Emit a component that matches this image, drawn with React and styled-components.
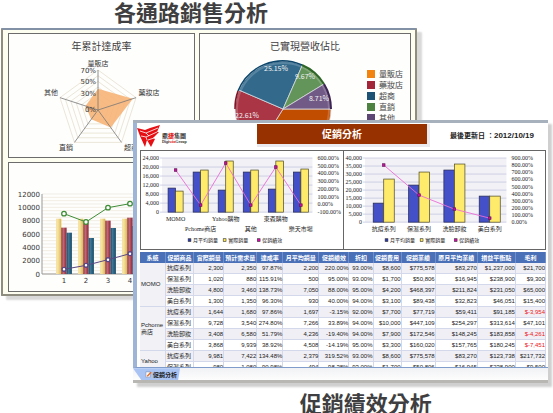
import React from "react";
import styled, { createGlobalStyle, css } from "styled-components";

const CJK = '"Noto Sans CJK TC", sans-serif';

const GlobalStyle = createGlobalStyle`
  *, *::before, *::after { box-sizing: border-box; }
  body {
    margin: 0;
    background: #fff;
    color: #333;
    font-family: "DejaVu Sans", ${CJK};
  }
`;

const Page = styled.main`
  display: flex;
  flex-direction: column;
  overflow: hidden;
`;

const Caption = styled.h1`
  margin: 0;
  font: 700 22px/22px ${CJK};
  color: #3f3f41;
  padding-left: ${(p) => p.$indent};
`;

const Stage = styled.div`
  display: grid;
  grid-template-columns: 133fr 284fr 131fr 5px;
  grid-template-rows: 92px auto;
  margin: 6px 0 8px;
`;

/* Dashboard window */

const BackWindow = styled.section`
  grid-column: 1 / 3;
  grid-row: 1 / 3;
  align-self: start;
  display: grid;
  grid-template-columns: 187fr 212fr;
  gap: 4px;
  margin-left: 1px;
  padding: 3px 4px 2px 5px;
  border: 2px solid #8f8c80;
  border-top-color: #8291a6;
  border-radius: 1px;
  background: #fefef0;
  box-shadow: 5px 4px 2px #d9d9d9;
`;

const Panel = styled.article`
  height: ${(p) => p.$height};
  border: 1px solid #6c6c6c;
  background: #fefefd;
  overflow: hidden;
  ${(p) => p.$wide && css`grid-column: 1 / -1;`}
`;

const PanelTitle = styled.h2`
  margin: 0;
  padding-top: 5px;
  font: 400 10px/14px ${CJK};
  text-align: center;
  color: #3f3f3f;
`;

const Drawing = styled.svg`
  display: block;
  width: ${(p) => p.$width || "100%"};
  overflow: visible;
`;

const ChartText = styled.text`
  font-family: ${(p) => p.$family || `"DejaVu Sans", ${CJK}`};
  font-size: 7px;
  fill: ${(p) => p.$color || "#333"};
  text-anchor: ${(p) => p.$anchor || "middle"};
`;

const SerifText = styled.text`
  font-family: "Liberation Serif", ${CJK};
  font-size: ${(p) => p.$size || "6px"};
  fill: #222;
  text-anchor: ${(p) => p.$anchor};
`;

const PieRow = styled.div`
  display: flex;
  justify-content: space-between;
  padding: 7px 7px 0 34px;
`;

const Legend = styled.ul`
  display: flex;
  flex-direction: column;
  margin: 8px 0 0;
  padding: 0;
  list-style: none;
`;

const LegendItem = styled.li`
  display: flex;
  align-items: center;
  gap: 4px;
  font: 400 8px/11px ${CJK};
  color: #444;
  &::before {
    content: "";
    width: 8px;
    height: 8px;
    background: ${(p) => p.$color};
  }
`;

/* Report window */

const FrontWindow = styled.section`
  grid-column: 2 / 4;
  grid-row: 2;
  z-index: 1;
  display: flex;
  flex-direction: column;
  min-width: 0;
  border-top: 3px solid #a7b0bd;
  border-bottom: 3px solid #b9b7b3;
  background: #fff;
  box-shadow: 4px 4px 2px #cfcfcf;
`;

const Sheet = styled.div`
  padding: 0 2px 0 3px;
  border-left: 4px solid #9fb5d8;
  border-bottom: 1px solid #7f9ccb;
`;

const SheetHeader = styled.header`
  display: grid;
  grid-template-columns: 117fr 172fr 116fr;
  height: 27px;
  padding-top: 1px;
`;

const Brand = styled.div`
  display: flex;
  gap: 1px;
  margin-left: -3px;
`;

const BrandName = styled.p`
  margin: 8px 0 0;
  font: 700 6px/7px ${CJK};
  color: #333;
  b { color: #e01818; }
  small {
    display: block;
    font: 700 4px/6px "Liberation Serif", serif;
  }
`;

const Banner = styled.h2`
  align-self: start;
  margin: 0;
  height: 23px;
  border-right: 3px solid #e9e9ee;
  border-bottom: 3px solid #e9e9ee;
  background: #973200;
  color: #fff;
  font: 700 10px/20px ${CJK};
  text-align: center;
`;

const Updated = styled.p`
  margin: 0;
  padding: 5px 12px 0 0;
  font: 700 7px/14px "Liberation Sans", ${CJK};
  text-align: right;
  white-space: nowrap;
  color: #222;
  time { font-size: 8px; }
`;

const ChartRow = styled.div`
  display: grid;
  grid-template-columns: 202fr 203fr;
  border: 1px solid #666;
  margin-bottom: 2px;
`;

const ChartCell = styled.div`
  & + & { border-left: 1px solid #666; }
`;

const TableClip = styled.div`
  height: 115px;
  overflow: hidden;
`;

const Table = styled.table`
  width: 100%;
  table-layout: fixed;
  border-collapse: separate;
  border-spacing: 0;
  font: 400 6px/10px "Liberation Sans", ${CJK};
  color: #222;
`;

const Col = styled.col`
  width: ${(p) => p.$width}px;
`;

const HeadCell = styled.th`
  height: 11px;
  padding: 0;
  background: #4a70b8;
  border-right: 1px solid #6f8fcb;
  color: #fff;
  font-weight: 700;
  white-space: nowrap;
`;

const Row = styled.tr`
  background: ${(p) => (p.$shaded ? "#efeff5" : "#fff")};
`;

const Cell = styled.td`
  height: 11px;
  padding: ${(p) => (p.$left ? "0 0 0 1px" : "0")};
  border-right: 1px solid #d3d8ea;
  border-bottom: 1px solid #d3d8ea;
  text-align: ${(p) => (p.$left ? "left" : "right")};
  white-space: nowrap;
  color: ${(p) => (p.$negative ? "#f01616" : "inherit")};
`;

const GroupCell = styled.th`
  padding: 0 0 0 1px;
  border-right: 1px solid #d3d8ea;
  border-bottom: 1px solid #d3d8ea;
  background: #f1f1f6;
  font-weight: 400;
  line-height: 7px;
  text-align: left;
  vertical-align: middle;
`;

const TabStrip = styled.footer`
  display: flex;
  height: 12px;
  background: linear-gradient(#f1f2f5, #fdfdfd);
`;

const Tab = styled.button`
  display: flex;
  align-items: center;
  gap: 1px;
  width: 47px;
  padding: 0 0 0 12px;
  border: 0;
  background: #a9c3f3;
  clip-path: polygon(0 0, 100% 0, 96% 100%, 18% 100%);
  font: 700 6px/11px ${CJK};
  color: #222;
  white-space: nowrap;
`;

/* Radar */

const RADAR_LABELS = [
  { text: "量販店", x: 97, y: 13 },
  { text: "藥妝店", x: 148, y: 42 },
  { text: "超商", x: 130, y: 97 },
  { text: "直銷", x: 65, y: 97 },
  { text: "其他", x: 50, y: 42 },
];
const RADAR_VALUES = [37, 64, 38, 20, 23];

function radarPoint(index, value) {
  const angle = ((index * 72 - 90) * Math.PI) / 180;
  const radius = (value / 70) * 40;
  return [97 + radius * Math.cos(angle), 57 + radius * Math.sin(angle)];
}
const radarRing = (values) => values.map((v, i) => radarPoint(i, v).join()).join(" ");

function RadarChart() {
  return (
    <Drawing viewBox="8 0 185 104">
      {[10, 20, 30, 40, 50, 60, 70].map((v) => (
        <polygon key={v} points={radarRing([v, v, v, v, v])} fill="none" stroke="#ebe6d8" />
      ))}
      <polygon points={radarRing(RADAR_VALUES)} fill="#f7b477" fillOpacity="0.9" />
      {RADAR_LABELS.map((label, i) => {
        const [x, y] = radarPoint(i, 70);
        return (
          <g key={label.text}>
            <line x1="97" y1="57" x2={x} y2={y} stroke="#777" strokeWidth="0.8" />
            <ChartText x={label.x} y={label.y} $family={CJK}>{label.text}</ChartText>
          </g>
        );
      })}
      {[[70, 20], [50, 31], [30, 43], [0, 59]].map(([v, y]) => (
        <ChartText key={v} x="95" y={y} $anchor="end">{v}%</ChartText>
      ))}
    </Drawing>
  );
}

/* Pie */

const SLICES = [
  { name: "量販店", value: 33.86, color: "#c04d00", swatch: "#f2830f" },
  { name: "藥妝店", value: 22.61, color: "#a93545", swatch: "#a32638", label: [13, 58] },
  { name: "超商", value: 25.15, color: "#336a8c", swatch: "#1c5273", label: [42, 11] },
  { name: "直銷", value: 9.67, color: "#63945a", swatch: "#4d8241", label: [71, 19] },
  { name: "其他", value: 8.71, color: "#725a86", swatch: "#5d4674", label: [85, 41] },
];

const rim = (share) => {
  const a = (share / 100) * 2 * Math.PI;
  return [49 + 48 * Math.cos(a), 49 + 48 * Math.sin(a)];
};

function PieChart() {
  let start = 0;
  const arcs = SLICES.map((slice) => {
    const [x1, y1] = rim(start);
    start += slice.value;
    const [x2, y2] = rim(start);
    return { ...slice, d: `M49 49L${x1} ${y1}A48 48 0 0 1 ${x2} ${y2}Z` };
  });
  return (
    <Drawing viewBox="0 0 98 98" $width="98px">
      {arcs.map((arc) => (
        <path key={arc.name} d={arc.d} fill={arc.color} stroke="#d7dbe0" strokeWidth="0.8" />
      ))}
      <circle cx="49" cy="49" r="46" fill="none" stroke="#fff" strokeOpacity="0.18" strokeWidth="2" />
      <path d="M4 31A48 48 0 0 1 68 5" fill="none" stroke="#0d466b" strokeWidth="1.5" />
      <path d="M68 5A48 48 0 0 1 90 24" fill="none" stroke="#2f6527" strokeWidth="2" />
      <path d="M90 24A48 48 0 0 1 97 49" fill="none" stroke="#3c2553" strokeWidth="2" />
      <path d="M1 49A48 48 0 0 1 4 31" fill="none" stroke="#7d1626" strokeWidth="1.5" />
      {arcs.filter((arc) => arc.label).map((arc) => (
        <ChartText key={arc.name} x={arc.label[0]} y={arc.label[1]} $family={CJK} $color="#f2f2f2">
          {arc.value}%
        </ChartText>
      ))}
    </Drawing>
  );
}

/* Monthly bars */

const MONTHS = [
  { bars: [8300, 6950, 6200], green: 9050, purple: 700 },
  { bars: [8300, 7600, 5400], green: 7800, purple: 1300 },
  { bars: [8300, 8000, 6900], green: 9950, purple: 2150 },
  { bars: [8300, 8450, 7200], green: 10550, purple: 3050 },
];
const monthY = (v) => 111 - (v / 12000) * 80;
const monthX = (i) => 55 + i * 22;

function MonthlyChart() {
  return (
    <Drawing viewBox="0 0 401 128">
      <defs>
        {[["y", "#d8b64c", "#f6e3a4"], ["r", "#8e1f31", "#c0707c"], ["b", "#174b69", "#3f7795"]].map(
          ([id, edge, mid]) => (
            <linearGradient key={id} id={`bar-${id}`}>
              <stop offset="0" stopColor={id === "y" ? mid : edge} />
              <stop offset="0.35" stopColor={mid} />
              <stop offset="1" stopColor={edge} />
            </linearGradient>
          )
        )}
      </defs>
      {Array.from({ length: 25 }, (_, i) => (
        <line key={i} x1="33" x2="395" y1={monthY(i * 500)} y2={monthY(i * 500)} stroke="#ece6da" strokeWidth="0.7" />
      ))}
      <path d="M33 31V111H395" fill="none" stroke="#999" />
      {[0, 2000, 4000, 6000, 8000, 10000, 12000].map((v) => (
        <ChartText key={v} x="31" y={monthY(v) + 2.5} $anchor="end">{v}</ChartText>
      ))}
      {MONTHS.map((month, i) => (
        <g key={i}>
          {month.bars.map((v, b) => (
            <rect
              key={b}
              x={monthX(i) - 8 + b * 5.3}
              y={monthY(v)}
              width="5.3"
              height={111 - monthY(v)}
              fill={`url(#bar-${"yrb"[b]})`}
            />
          ))}
          <ChartText x={monthX(i)} y="120">{i + 1}</ChartText>
        </g>
      ))}
      {[["green", "#3f8c37"], ["purple", "#5b4683"]].map(([key, color]) => (
        <g key={key} fill="#fff" stroke={color}>
          <polyline fill="none" points={MONTHS.map((m, i) => `${monthX(i)},${monthY(m[key])}`).join(" ")} />
          {MONTHS.map((m, i) => (
            <circle key={i} cx={monthX(i)} cy={monthY(m[key])} r={key === "green" ? 2.3 : 1.9} strokeWidth="1.3" />
          ))}
        </g>
      ))}
    </Drawing>
  );
}

/* Combined bar and line charts */

function ComboChart({ width, plot, ticks, rates, groups, bar, labelX, legendX }) {
  const { left, right, bottom } = plot;
  const top = 7;
  const at = (list, i) => top + ((bottom - top) * i) / (list.length - 1);
  const step = (right - left) / groups.length;
  const center = (i) => left + step * (i + 0.5) + 1;
  return (
    <Drawing viewBox={`0 0 ${width} 98`}>
      <rect x={left} y={top} width={right - left} height={bottom - top} fill="#f1f1f6" />
      {ticks.map((t, i) => (
        <g key={t}>
          <line x1={left - 2} x2={right} y1={at(ticks, i)} y2={at(ticks, i)} stroke="#c5c7e0" strokeWidth="0.8" />
          <SerifText x={left - 3} y={at(ticks, i) + 2} $anchor="end">{t}</SerifText>
        </g>
      ))}
      {rates.map((r, i) => (
        <SerifText key={r} x={labelX} y={at(rates, i) + 2} $anchor="start">{r}</SerifText>
      ))}
      {groups.map((g, i) => (
        <g key={g.name}>
          <rect x={center(i) - bar} y={g.average} width={bar} height={bottom - g.average} fill="#4350c8" stroke="#26284f" strokeWidth="0.7" />
          <rect x={center(i)} y={g.actual} width={bar} height={bottom - g.actual} fill="#ffeb6b" stroke="#4b4722" strokeWidth="0.7" />
          <SerifText x={center(i)} y={g.low ? 80 : bottom + 9} $anchor="middle">{g.name}</SerifText>
        </g>
      ))}
      <polyline fill="none" stroke="#ec6cd6" strokeWidth="0.9" points={groups.map((g, i) => `${center(i)},${g.rate}`).join(" ")} />
      {groups.map((g, i) => (
        <rect key={g.name} x={center(i) - 1.3} y={g.rate - 1.3} width="2.6" height="2.6" fill="#c4109c" stroke="#5e0f50" strokeWidth="0.6" />
      ))}
      {[["月平均銷量", "#2b36ae", 0], ["實際銷量", "#ffe94d", 35], ["促銷績效", "#e100b4", 69]].map(([name, color, dx]) => (
        <g key={name}>
          <rect x={legendX + dx} y="87.5" width="2.8" height="2.8" fill={color} stroke="#333" strokeWidth="0.6" />
          <SerifText $size="5px" x={legendX + dx + 5} y="91" $anchor="start">{name}</SerifText>
        </g>
      ))}
    </Drawing>
  );
}

const CHANNELS = [
  { name: "MOMO", average: 37, actual: 40, rate: 19 },
  { name: "Pchome商店", average: 21, actual: 19, rate: 54, low: true },
  { name: "Yahoo購物", average: 39, actual: 10, rate: 12 },
  { name: "其他", average: 21, actual: 19, rate: 54, low: true },
  { name: "東森購物", average: 38, actual: 10, rate: 16 },
  { name: "樂天市場", average: 21, actual: 18, rate: 54, low: true },
];
const SERIES = [
  { name: "抗痘系列", average: 52, actual: 28, rate: 14 },
  { name: "保濕系列", average: 34, actual: 21, rate: 44 },
  { name: "洗臉卸妝", average: 19, actual: 13, rate: 58 },
  { name: "美白系列", average: 45, actual: 45, rate: 67 },
];
const CHANNEL_TICKS = ["24,000", "20,000", "16,000", "12,000", "8,000", "4,000", "0"];
const CHANNEL_RATES = ["600.00%", "500.00%", "400.00%", "300.00%", "200.00%", "100.00%", "0.00%", "-100.00%"];
const SERIES_TICKS = ["40,000", "35,000", "30,000", "25,000", "20,000", "15,000", "10,000", "5,000", "0"];
const SERIES_RATES = ["900.00%", "800.00%", "700.00%", "600.00%", "500.00%", "400.00%", "300.00%", "200.00%", "100.00%", "0.00%"];

/* Table data */

const COLUMNS = [
  ["系統", 26], ["促銷商品", 28], ["實際銷量", 30], ["預計需求量", 33], ["達成率", 26],
  ["月平均銷量", 36], ["促銷績效", 30], ["折扣", 24], ["促銷費用", 28], ["促銷業績", 34],
  ["原月平均業績", 42], ["損益平衡點", 38], ["毛利", 30],
];
const GROUPS = [
  {
    name: "MOMO",
    rows: [
      ["抗痘系列", "2,300", "2,350", "97.87%", "2,200", "220.00%", "93.00%", "$8,600", "$775,578", "$83,270", "$1,237,000", "$21,700"],
      ["保濕系列", "1,020", "880", "115.91%", "500", "95.00%", "93.00%", "$1,700", "$50,806", "$16,945", "$238,900", "$9,300"],
      ["洗臉卸妝", "4,800", "3,460", "138.73%", "7,050", "88.00%", "95.00%", "$4,200", "$468,397", "$211,824", "$231,050", "$65,000"],
      ["美白系列", "1,300", "1,350", "96.30%", "930", "40.00%", "94.00%", "$3,100", "$89,438", "$32,823", "$46,051", "$15,400"],
    ],
  },
  {
    name: "Pchome 商店",
    rows: [
      ["抗痘系列", "1,644", "1,680", "97.86%", "1,697", "-3.15%", "92.00%", "$7,700", "$77,719", "$59,411", "$91,185", "$-3,954"],
      ["保濕系列", "9,728", "3,540", "274.80%", "7,266", "33.89%", "94.00%", "$10,000", "$447,109", "$254,297", "$313,614", "$47,101"],
      ["洗臉卸妝", "3,408", "6,580", "51.79%", "4,236", "-19.40%", "94.00%", "$7,900", "$172,546", "$148,245", "$183,858", "$-4,261"],
      ["美白系列", "3,868", "9,939", "38.92%", "4,508", "-14.19%", "95.00%", "$3,300", "$160,020", "$157,765", "$180,245", "$-7,451"],
    ],
  },
  {
    name: "Yahoo",
    rows: [
      ["抗痘系列", "9,981", "7,422", "134.48%", "2,379", "319.52%", "93.00%", "$8,600", "$775,578", "$83,270", "$123,738", "$217,732"],
      ["保濕系列", "980", "1,080", "90.98%", "494", "98.38%", "93.00%", "$1,700", "$50,806", "$16,945", "$238,900", "$9,500"],
    ],
  },
];

function SalesTable() {
  return (
    <Table>
      <colgroup>
        {COLUMNS.map(([name, width]) => <Col key={name} $width={width} />)}
      </colgroup>
      <thead>
        <tr>{COLUMNS.map(([name]) => <HeadCell key={name} scope="col">{name}</HeadCell>)}</tr>
      </thead>
      <tbody>
        {GROUPS.map((group) =>
          group.rows.map((cells, r) => (
            <Row key={group.name + r} $shaded={r % 2 === 0}>
              {r === 0 && <GroupCell scope="rowgroup" rowSpan={group.rows.length}>{group.name}</GroupCell>}
              {cells.map((value, c) => (
                <Cell key={c} $left={c === 0} $negative={value.startsWith("$-")}>{value}</Cell>
              ))}
            </Row>
          ))
        )}
      </tbody>
    </Table>
  );
}

function Logo() {
  return (
    <Drawing viewBox="0 0 24 24" $width="24px">
      <path d="M0 3L8 5L13 3L23 0L20 7L22 7L16 13L18 14L14 22L10 15L8 22L3 11Z" fill="#e60f14" />
      <path d="M3 6L9 8L21 3M4 11L9 12L20 7M9 12L10 15M9 8L12 11M11 15L17 13" fill="none" stroke="#fff" strokeWidth="0.8" />
    </Drawing>
  );
}

function NoteIcon() {
  return (
    <Drawing viewBox="0 0 8 8" $width="7px">
      <path d="M1 1H6V7H1Z" fill="#fff" stroke="#7c8fb8" strokeWidth="0.7" />
      <path d="M2.5 6L7 1.5" stroke="#ea6a1c" strokeWidth="1.6" />
    </Drawing>
  );
}

export default function App() {
  return (
    <Page>
      <GlobalStyle />
      <Caption $indent="20.6%">各通路銷售分析</Caption>
      <Stage>
        <BackWindow>
          <Panel $height="125px">
            <PanelTitle>年累計達成率</PanelTitle>
            <RadarChart />
          </Panel>
          <Panel $height="125px">
            <PanelTitle>已實現營收佔比</PanelTitle>
            <PieRow>
              <PieChart />
              <Legend>
                {SLICES.map((s) => <LegendItem key={s.name} $color={s.swatch}>{s.name}</LegendItem>)}
              </Legend>
            </PieRow>
          </Panel>
          <Panel $height="130px" $wide>
            <MonthlyChart />
          </Panel>
        </BackWindow>
        <FrontWindow>
          <Sheet>
            <SheetHeader>
              <Brand>
                <Logo />
                <BrandName>鼎<b>捷</b>集團<small>Digi<b>win</b>Group</small></BrandName>
              </Brand>
              <Banner>促銷分析</Banner>
              <Updated>最後更新日 ：<time dateTime="2012-10-19">2012/10/19</time></Updated>
            </SheetHeader>
            <ChartRow>
              <ChartCell>
                <ComboChart
                  width={201}
                  plot={{ left: 21, right: 171, bottom: 61 }}
                  ticks={CHANNEL_TICKS}
                  rates={CHANNEL_RATES}
                  groups={CHANNELS}
                  bar={7.5}
                  labelX={176}
                  legendX={47}
                />
              </ChartCell>
              <ChartCell>
                <ComboChart
                  width={201}
                  plot={{ left: 21, right: 162, bottom: 71 }}
                  ticks={SERIES_TICKS}
                  rates={SERIES_RATES}
                  groups={SERIES}
                  bar={10.5}
                  labelX={167}
                  legendX={41}
                />
              </ChartCell>
            </ChartRow>
            <TableClip>
              <SalesTable />
            </TableClip>
          </Sheet>
          <TabStrip>
            <Tab type="button"><NoteIcon />促銷分析</Tab>
          </TabStrip>
        </FrontWindow>
      </Stage>
      <Caption as="h2" $indent="54.2%">促銷績效分析</Caption>
    </Page>
  );
}
